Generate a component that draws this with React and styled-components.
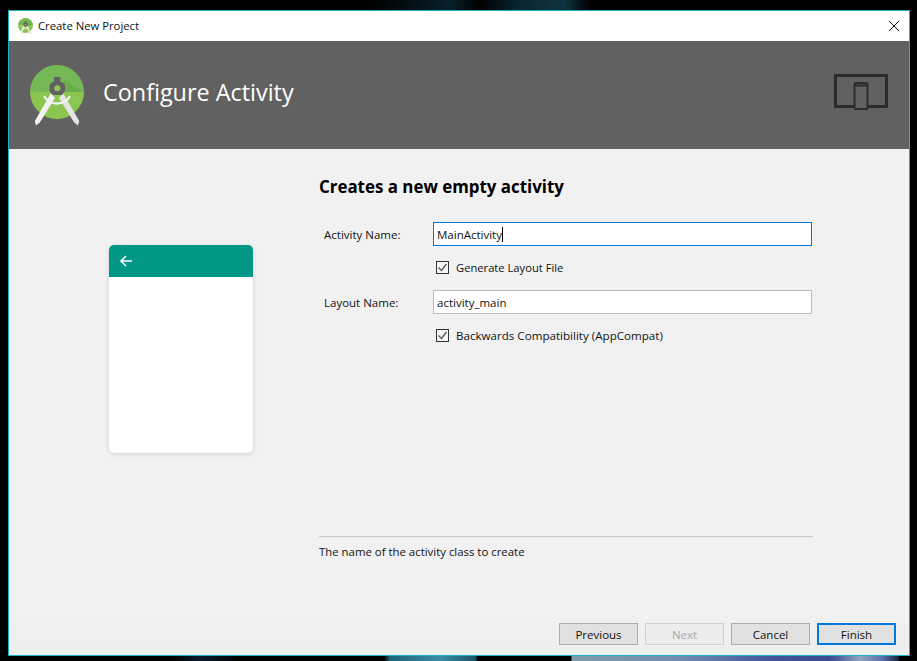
import React from 'react';
import styled, { createGlobalStyle } from 'styled-components';

const GlobalStyle = createGlobalStyle`
  html, body {
    margin: 0;
    height: 100%;
    background: #000;
    overflow: hidden;
  }
  * { box-sizing: border-box; }
`;

// wallpaper only shows in the thin strips around the dialog
const Desktop = styled.div`
  width: 917px;
  height: 661px;
  padding: 10px 7px 5px 8px;
  background-color: #000;
  background-image:
    linear-gradient(90deg, #000 170px, #0b1c2c 200px, #000 240px, #000 384px, #1f6478 390px, #3a8ea6 440px, #1c5568 475px, #000 478px, #000 571px, #7e9dab 572px, #6f8db0 680px, #42509a 780px, #3d4a92 830px, #8fa3c0 860px, #5a6ea8 883px, #1a2440 898px, #000 900px),
    linear-gradient(90deg, #000 370px, #08202a 450px, #000 480px, #0a2630 520px, #0f3440 565px, #000 590px);
  background-size: 100% 5px, 100% 10px;
  background-position: 0 100%, 0 0;
  background-repeat: no-repeat;
  font-family: "Open Sans", "Noto Sans", sans-serif;
  font-size: 11.5px;
  color: #111;
`;

const Window = styled.div`
  height: 100%;
  border: 1px solid #17b3c8;
  background: #f1f1f1;
  display: flex;
  flex-direction: column;
`;

const TitleBar = styled.div`
  height: 30px;
  flex: none;
  background: #fff;
  display: flex;
  align-items: center;
  padding: 0 9px;
  gap: 5px;
`;

const TitleText = styled.span`
  flex: 1;
  font-size: 11.3px;
  margin-bottom: 2px;
`;

const Banner = styled.div`
  height: 108px;
  flex: none;
  background: #616161;
  display: flex;
  align-items: center;
  padding: 0 21px 0 21px;
`;

const BannerTitle = styled.h1`
  flex: 1;
  margin: 0 0 6px 19px;
  font-size: 23.4px;
  font-weight: 400;
  color: #fff;
`;

const BannerIcon = styled.div`
  display: flex;
  margin-bottom: 6px;
`;

const Content = styled.div`
  flex: 1;
  display: flex;
  min-height: 0;
`;

const PreviewColumn = styled.div`
  width: 310px;
  flex: none;
  padding: 96px 0 0 100px;
`;

const PhoneCard = styled.div`
  width: 144px;
  height: 208px;
  background: #fff;
  border-radius: 5px;
  overflow: hidden;
  box-shadow: 0 1px 4px rgba(0, 0, 0, 0.14);
`;

const PhoneBar = styled.div`
  height: 32px;
  background: #009688;
  display: flex;
  align-items: center;
  padding-left: 10px;
`;

const FormColumn = styled.div`
  width: 494px;
  padding-top: 26px;
  display: flex;
  flex-direction: column;
`;

const Heading = styled.h2`
  margin: 0 0 24px;
  font-size: 16.9px;
  line-height: 23px;
  font-weight: 700;
  color: #000;
`;

const FieldRow = styled.div`
  display: flex;
  align-items: center;
  height: 24px;
`;

const FieldLabel = styled.label`
  width: 114px;
  padding-left: 5px;
  flex: none;
`;

const TextField = styled.div`
  flex: 1;
  height: 24px;
  margin-right: 1px;
  background: #fff;
  border: 1px solid ${(p) => (p.$focused ? '#0078d7' : '#bdbdbd')};
  display: flex;
  align-items: center;
  padding-left: 3px;
`;

const Caret = styled.span`
  width: 1px;
  height: 15px;
  background: #000;
`;

const CheckRow = styled.div`
  display: flex;
  align-items: center;
  gap: 7px;
  height: 24px;
  margin: 9px 0 11px 117px;
`;

const CheckBox = styled.span`
  width: 13px;
  height: 13px;
  border: 1px solid #333;
  background: #f4f4f4;
  display: flex;
`;

const CheckLabel = styled.span`
  font-size: ${(p) => p.$size || 11.5}px;
`;

const HelpArea = styled.div`
  margin-top: auto;
  margin-bottom: 55px;
  border-top: 1px solid #c9c9c9;
  padding-top: 7px;
  font-size: 11.4px;
  line-height: 16px;
`;

const Footer = styled.div`
  height: 40px;
  flex: none;
  display: flex;
  justify-content: flex-end;
  gap: 7px;
  padding: 8px 13px 0 0;
  background: linear-gradient(#f1f1f1, #eeeeee);
`;

const DialogButton = styled.button`
  width: 79px;
  height: 22px;
  padding: 0;
  font: inherit;
  color: ${(p) => (p.disabled ? '#a9a9a9' : '#111')};
  background: ${(p) => (p.disabled ? '#ececec' : '#e1e1e1')};
  border: ${(p) => (p.$primary ? '2px solid #0078d7' : `1px solid ${p.disabled ? '#d0d0d0' : '#adadad'}`)};
`;

function StudioLogo({ size }) {
  return (
    <svg width={size} height={(size * 61) / 54} viewBox="0 0 54 61">
      <path d="M27 0a27 27 0 0 1 27 27H0A27 27 0 0 1 27 0z" fill="#75b956" />
      <path d="M33 15l21 12H33z" fill="#69ab4d" />
      <path d="M0 27h54a27 27 0 0 1-54 0z" fill="#8ac650" />
      <path d="M21 28L4.800 56 6 60.500 9.800 57.500 25 33z" fill="#f2f2f2" />
      <path d="M33 28l16.200 28-1.200 4.500-3.800-3L29 33z" fill="#e4e4e4" />
      <path d="M14 31a15 15 0 0 0 26 0" fill="none" stroke="#f2f2f2" strokeWidth="2.400" />
      <path d="M24 12h6.500v5h1.500l3 3v6l-3 4H22.500l-3-4v-6l3-3H24z" fill="#616161" />
      <circle cx="27.300" cy="23.300" r="3" fill="#8ac650" />
    </svg>
  );
}

function DeviceIcon() {
  return (
    <svg width="54" height="36" viewBox="0 0 54 36">
      <path d="M1.500 1.500h51v31h-51z" fill="none" stroke="#2b2b2b" strokeWidth="3" />
      <rect x="20.500" y="9" width="13" height="26" rx="1.500" fill="#616161" stroke="#2b2b2b" strokeWidth="2" />
      <path d="M20.500 11.500h13" stroke="#2b2b2b" strokeWidth="2" />
    </svg>
  );
}

function CheckMark() {
  return (
    <svg width="11" height="11" viewBox="0 0 11 11">
      <path d="M1.500 5.500l3 3 5-6.500" fill="none" stroke="#555" strokeWidth="1.300" />
    </svg>
  );
}

function Check({ children, size }) {
  return (
    <CheckRow>
      <CheckBox>
        <CheckMark />
      </CheckBox>
      <CheckLabel $size={size}>{children}</CheckLabel>
    </CheckRow>
  );
}

export default function App() {
  return (
    <Desktop>
      <GlobalStyle />
      <Window>
        <TitleBar>
          <StudioLogo size={15} />
          <TitleText>Create New Project</TitleText>
          <svg width="12" height="12" viewBox="0 0 12 12">
            <path d="M1 1l10 10M11 1L1 11" stroke="#111" strokeWidth="1" />
          </svg>
        </TitleBar>
        <Banner>
          <StudioLogo size={54} />
          <BannerTitle>Configure Activity</BannerTitle>
          <BannerIcon>
            <DeviceIcon />
          </BannerIcon>
        </Banner>
        <Content>
          <PreviewColumn>
            <PhoneCard>
              <PhoneBar>
                <svg width="14" height="14" viewBox="0 0 14 14">
                  <path d="M13 7H2M7 2L2 7l5 5" fill="none" stroke="#fff" strokeWidth="1.600" />
                </svg>
              </PhoneBar>
            </PhoneCard>
          </PreviewColumn>
          <FormColumn>
            <Heading>Creates a new empty activity</Heading>
            <FieldRow>
              <FieldLabel>Activity Name:</FieldLabel>
              <TextField $focused>
                MainActivity
                <Caret />
              </TextField>
            </FieldRow>
            <Check size={11.2}>Generate Layout File</Check>
            <FieldRow>
              <FieldLabel>Layout Name:</FieldLabel>
              <TextField>activity_main</TextField>
            </FieldRow>
            <Check size={11.6}>Backwards Compatibility (AppCompat)</Check>
            <HelpArea>The name of the activity class to create</HelpArea>
          </FormColumn>
        </Content>
        <Footer>
          <DialogButton>Previous</DialogButton>
          <DialogButton disabled>Next</DialogButton>
          <DialogButton>Cancel</DialogButton>
          <DialogButton $primary>Finish</DialogButton>
        </Footer>
      </Window>
    </Desktop>
  );
}
